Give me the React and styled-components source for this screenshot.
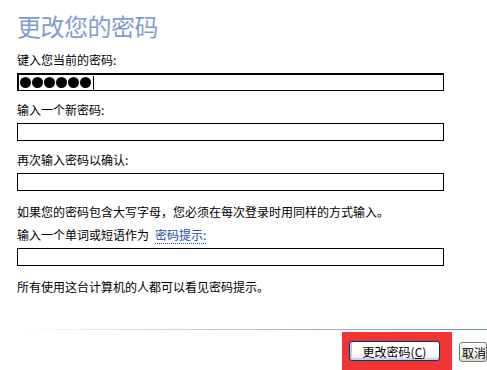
import React from "react"
import styled, { createGlobalStyle } from "styled-components"

const GlobalStyle = createGlobalStyle`
  html, body {
    margin: 0;
    padding: 0;
    background: #fff;
    overflow: hidden;
  }
  body {
    font-family: "Noto Sans CJK SC", "Liberation Sans", sans-serif;
    font-size: 12px;
    color: #000;
  }
`

const Page = styled.div`
  width: 487px;
  height: 370px;
  padding: 12px 0 0 0;
  box-sizing: border-box;
  overflow: hidden;
`

const Content = styled.div`
  padding-left: 17px;
`

const Title = styled.h1`
  margin: 0;
  font-size: 24px;
  line-height: 28px;
  font-weight: normal;
  color: #7f9cd2;
  letter-spacing: -0.5px;
`

const Label = styled.div`
  margin-top: ${props => props.top || 11}px;
  line-height: 16px;
  font-size: 12px;
  white-space: nowrap;
`

const HintLink = styled.span`
  margin-left: 6px;
  color: #1d4f9c;
  border-bottom: 1px dotted #1d4f9c;
`

const Box = styled.div`
  margin-top: 5px;
  width: 427px;
  height: 18px;
  box-sizing: border-box;
  border: 1px solid #000;
  border-width: ${props => (props.focused ? "2px 1px 1px 2px" : "1px")};
  background: #fff;
  display: flex;
  align-items: center;
  gap: 1px;
  padding-left: 1px;
`

const Dot = styled.span`
  width: 11px;
  height: 11px;
  border-radius: 50%;
  background: #000;
`

const Caret = styled.span`
  width: 1px;
  height: 14px;
  background: #000;
  margin-left: 1px;
`

const Divider = styled.div`
  margin: 34px 0 0 20px;
  height: 1px;
  background: linear-gradient(to right, rgba(111, 143, 191, 0), #c9d6ea 30%, #6f8fbf 100%);
`

const ButtonRow = styled.div`
  display: flex;
  align-items: flex-start;
  gap: 7px;
  margin-top: 2px;
  padding-left: 342px;
`

const Highlight = styled.div`
  background: #f23434;
  padding: 9px 12px 10px 7px;
`

const Button = styled.div`
  height: 20px;
  box-sizing: border-box;
  display: flex;
  align-items: center;
  justify-content: ${props => (props.primary ? "center" : "flex-start")};
  width: ${props => (props.primary ? "91px" : "40px")};
  padding-left: ${props => (props.primary ? "0" : "2px")};
  border: 1px solid ${props => (props.primary ? "#003c74" : "#7a7a7a")};
  border-radius: 3px;
  background: ${props =>
    props.primary
      ? "linear-gradient(#fff, #fff 60%, #e6e8f4)"
      : "linear-gradient(#fefefe, #f0f0ea 60%, #d6d5cc)"};
  box-shadow: ${props => (props.primary ? "inset 2px 0 0 #b9c9ef, inset 0 -2px 0 #c6d3f2" : "none")};
  font-size: 12px;
  white-space: nowrap;
  margin-top: ${props => (props.primary ? "0" : "10px")};
`

const Underlined = styled.span`
  text-decoration: underline;
`

const Field = ({ label, top, focused, dots }) => (
  <>
    <Label top={top}>{label}</Label>
    <Box focused={focused}>
      {dots &&
        Array.from({ length: dots }).map((_, i) => <Dot key={i} />)}
      {focused && <Caret />}
    </Box>
  </>
)

export default function App() {
  return (
    <>
      <GlobalStyle />
      <Page>
        <Content>
          <Title>更改您的密码</Title>
          <Field label="键入您当前的密码:" top={12} focused dots={6} />
          <Field label="输入一个新密码:" />
          <Field label="再次输入密码以确认:" />
          <Label top={13}>如果您的密码包含大写字母，您必须在每次登录时用同样的方式输入。</Label>
          <Label top={7}>
            输入一个单词或短语作为
            <HintLink>密码提示:</HintLink>
          </Label>
          <Box />
          <Label top={13}>所有使用这台计算机的人都可以看见密码提示。</Label>
        </Content>
        <Divider />
        <ButtonRow>
          <Highlight>
            <Button primary>
              更改密码(<Underlined>C</Underlined>)
            </Button>
          </Highlight>
          <Button>取消</Button>
        </ButtonRow>
      </Page>
    </>
  )
}
